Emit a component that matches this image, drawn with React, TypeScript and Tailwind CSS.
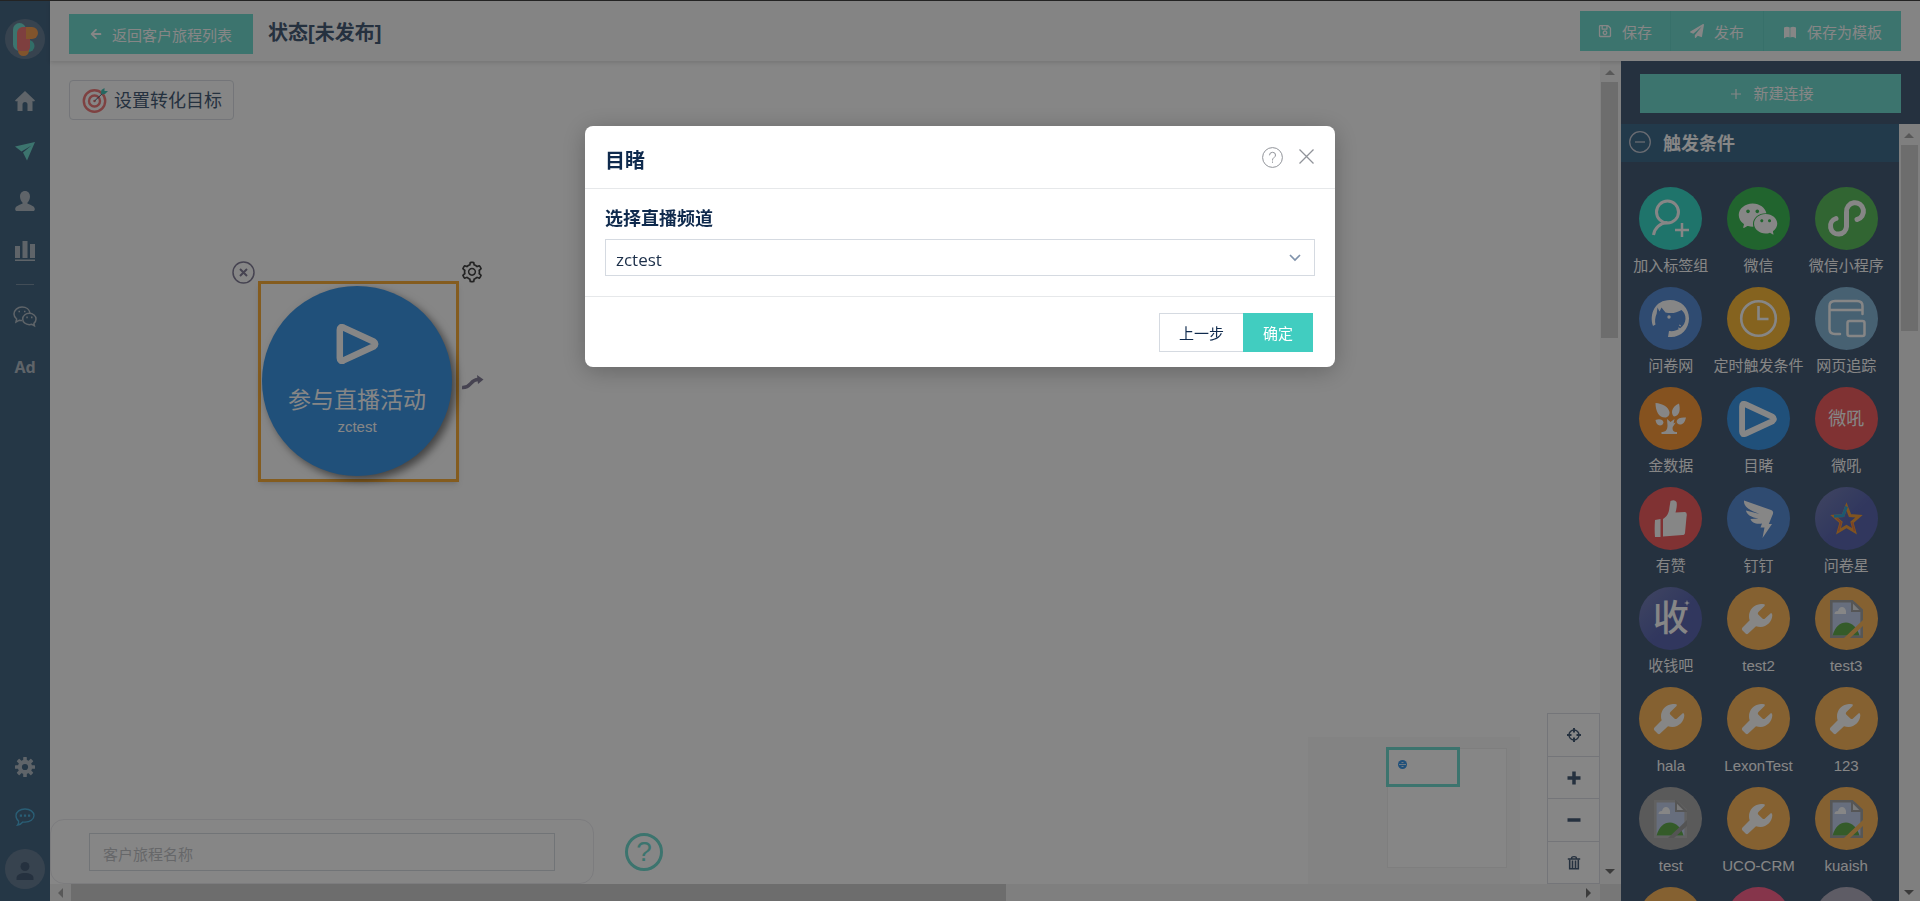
import React from "react";
import { AiOutlineSetting, AiFillWechat } from "react-icons/ai";
import { FaArrowLeft, FaPaperPlane, FaRegSave } from "react-icons/fa";

type IconProps = { className?: string };

function Logo() {
  return (
    <svg viewBox="0 0 40 40" className="size-10" aria-hidden="true">
      <circle cx="20" cy="20" r="20" fill="#6a8097" />
      <rect x="8" y="4" width="13" height="28" rx="6.500" fill="#72ddd2" />
      <circle cx="23.500" cy="27" r="6" fill="#5ed0c4" />
      <rect x="13" y="8" width="20" height="12" rx="6" fill="#f5a054" />
      <rect x="13" y="22" width="11" height="15" rx="5.500" fill="#f5a054" />
      <path d="M12 14a6 6 0 0 1 6-6h3v12h4v8q0 4-4 4h-6q-3 0-3-4z" fill="#f07878" />
    </svg>
  );
}

function HomeIcon() {
  return (
    <svg viewBox="0 0 20 20" className="size-5" fill="currentColor" aria-hidden="true">
      <path d="M10 0 20 9.500 19 10.500 17.500 10V20H12.500V13.500Q12.500 11 10 11T7.500 13.500V20H2.500V10L1 10.500 0 9.500Z" />
    </svg>
  );
}

function SendIcon() {
  return (
    <svg viewBox="0 0 20 20" className="size-5" fill="currentColor" aria-hidden="true">
      <path d="M20 1 0 5.500 6.500 10.500 16.500 4.500 8 11.500 12 19.500Z" />
    </svg>
  );
}

function UserIcon() {
  return (
    <svg viewBox="0 0 20 20" className="size-5" fill="currentColor" aria-hidden="true">
      <path d="M10 0c3.200 0 5 2.400 5 5.600 0 2.600-1.200 4.700-2.500 6v1.200c2.500.9 7.300 2.400 7.300 5.200 0 1.400-.6 2-1.800 2H2c-1.200 0-1.800-.6-1.800-2 0-2.800 4.800-4.300 7.300-5.200v-1.200C6.200 10.300 5 8.200 5 5.600 5 2.400 6.800 0 10 0z" />
    </svg>
  );
}

function BarsIcon() {
  return (
    <svg viewBox="0 0 20 20" className="size-5" fill="currentColor" aria-hidden="true">
      <path d="M0 5h5v12H0zM7.500 0h5v17h-5zM15 3h5v14h-5zM0 18.500h20V20H0z" />
    </svg>
  );
}

function WechatOutlineIcon() {
  return (
    <svg viewBox="0 0 24 22" className="h-[22px] w-6" fill="none" stroke="currentColor" strokeWidth="1.500" aria-hidden="true">
      <path d="M9 14.500c-1 0-1.800-.1-2.600-.3L3 16l.6-3C2 11.800 1 10 1 8c0-3.800 3.600-7 8-7s7.500 2.600 8 6" />
      <path d="M23 13c0-3.200-3-5.700-6.700-5.700S9.700 9.800 9.700 13s2.900 5.700 6.600 5.700c.9 0 1.700-.1 2.500-.4l2.600 1.500-.5-2.400C22.200 16.300 23 14.700 23 13z" />
      <path d="M5.500 5.500h1.500M11 5.500h1.500M13.300 11.300h1.500M18 11.300h1.500" strokeWidth="1.700" />
    </svg>
  );
}

function GearIcon() {
  return (
    <svg viewBox="0 0 20 20" className="size-5" aria-hidden="true">
      <g fill="currentColor">
        <rect x="8.200" y="0" width="3.600" height="20" rx="0.600" />
        <rect x="0" y="8.200" width="20" height="3.600" rx="0.600" />
        <rect x="8.200" y="0" width="3.600" height="20" rx="0.600" transform="rotate(45 10 10)" />
        <rect x="8.200" y="0" width="3.600" height="20" rx="0.600" transform="rotate(-45 10 10)" />
        <circle cx="10" cy="10" r="7.200" />
      </g>
      <circle cx="10" cy="10" r="3.100" fill="#486985" />
    </svg>
  );
}

function ChatIcon() {
  return (
    <svg viewBox="0 0 20 18" className="h-[18px] w-5" aria-hidden="true">
      <path d="M10 1c5 0 9 2.800 9 6.600s-4 6.600-9 6.600c-.8 0-1.500 0-2.200-.2C6.600 15.600 4.800 16.600 2.600 17c.8-1 1.200-2.300 1-3.900C2 12 1 10 1 7.600 1 3.800 5 1 10 1z" fill="none" stroke="currentColor" strokeWidth="1.300" />
      <path d="M4.800 6.500h2.200v2.200H4.800zM8.900 6.500h2.200v2.200H8.900zM13 6.500h2.200v2.200H13z" fill="currentColor" />
    </svg>
  );
}

function AvatarIcon() {
  return (
    <svg viewBox="0 0 40 40" className="size-10" aria-hidden="true">
      <circle cx="20" cy="20" r="20" fill="#6a8097" />
      <circle cx="20" cy="17.500" r="4.500" fill="#485d78" />
      <path d="M11.500 31v-2c0-3.500 4-5 8.500-5s8.500 1.500 8.500 5v2z" fill="#485d78" />
    </svg>
  );
}

function TargetIcon() {
  return (
    <svg viewBox="0 0 26 26" className="size-[26px]" fill="none" aria-hidden="true">
      <circle cx="12.500" cy="14" r="10.700" stroke="#f07c7c" strokeWidth="2.400" />
      <circle cx="12.500" cy="14" r="5.500" stroke="#f07c7c" strokeWidth="2.400" />
      <circle cx="12.500" cy="14" r="1.300" fill="#f07c7c" />
      <path d="M12.500 14 22 5" stroke="#485d78" strokeWidth="1" />
      <path d="m19 6 .4-3L22.500 1v3H26l-3 3-3 .6z" fill="#48c4b8" />
    </svg>
  );
}

function BookIcon() {
  return (
    <svg viewBox="0 0 14 14" className="size-3.5" fill="currentColor" aria-hidden="true">
      <path d="M1 1.500Q4 0 6.700 1.500V11.500Q4 10.400 1 12.500zM7.300 1.500Q10 0 13 1.500V12.500Q10 10.400 7.300 11.500z" />
    </svg>
  );
}

function PlayIcon({ className }: IconProps) {
  return (
    <svg viewBox="0 0 42 40" className={className} aria-hidden="true">
      <path d="M3.300 6Q3.300 2 7 3.600L37 17.500Q40.500 20 37 22.500L7 36.400Q3.300 38 3.300 34Z" fill="none" stroke="white" strokeWidth="6.500" strokeLinejoin="round" />
    </svg>
  );
}

function MemberAddIcon() {
  return (
    <svg viewBox="0 0 63 63" className="size-full" fill="none" stroke="white" strokeWidth="3" aria-hidden="true">
      <circle cx="28.500" cy="25" r="11" />
      <path d="M14.500 48c1-7 6.500-12 14-12.500" />
      <path d="M43 36v14M36 43h14" strokeWidth="2.500" />
    </svg>
  );
}

function MiniProgramIcon() {
  return (
    <svg viewBox="0 0 63 63" className="size-full" fill="none" stroke="white" strokeWidth="5" strokeLinecap="round" aria-hidden="true">
      <path d="M21 31.500a8 8 0 1 0 10.500 8V25A8.500 8.500 0 1 1 42 32.500" />
    </svg>
  );
}

function SurveyDogIcon() {
  return (
    <svg viewBox="0 0 63 63" className="size-full" aria-hidden="true">
      <path d="M14 39C10 27 16 13 31 13c11 0 19 8 19 18.500S42 50 32 50h-3l1-6c8 1 16-4 16.500-12 .2-4-1.500-7-4-9-5 3-10 3.800-16 2.500l-4-5-2 4-2-4-.8 6c-1.700 4-2 8-1.200 11z" fill="white" />
      <circle cx="30" cy="30" r="1.700" fill="white" />
      <path d="m40 38 2 1M39 41l2 .5" stroke="white" strokeWidth="1" />
    </svg>
  );
}

function ClockIcon() {
  return (
    <svg viewBox="0 0 63 63" className="size-full" fill="none" stroke="white" strokeWidth="2.600" aria-hidden="true">
      <circle cx="31.500" cy="31.500" r="17.300" />
      <path d="M31.500 19v13h10" />
    </svg>
  );
}

function WebTrackIcon() {
  return (
    <svg viewBox="0 0 63 63" className="size-full" fill="none" stroke="white" strokeWidth="2.500" strokeLinecap="round" aria-hidden="true">
      <path d="M25 47h-5q-5.500 0-5.500-5V19q0-5 5.500-5h22q5.500 0 5.500 5v8M14.500 23H47" />
      <rect x="32.500" y="34" width="17" height="15" rx="2" />
    </svg>
  );
}

function TreeIcon() {
  return (
    <svg viewBox="0 0 63 63" className="size-full" fill="white" aria-hidden="true">
      <path d="M16.500 16c7 .5 13 4 14 9 .3 3-1.500 5.500-4.500 5.500-6 0-9.500-6-9.500-14.500zM40 16.500c1.500 6 1 12-5 13-3-2.500-3.500-9 5-13zM16.500 33c4-1.500 7.500-.5 8 2.500-.5 2-1.500 3-3.500 3-2.500 0-4-2.500-4.500-5.500zM47 30.500c-1 4.500-3 7-6 7-2 0-3.500-1.500-3.300-3.500.8-3 4.800-4 9.300-3.500z" />
      <path d="m28 32 3.500 3 4-3-1 4.500 2.200-1-3 4.500c-.5 3 .5 5 4.300 5v2H22.500v-2c4 0 6-2 6-6.500z" />
    </svg>
  );
}

function ThumbIcon() {
  return (
    <svg viewBox="0 0 63 63" className="size-full" fill="white" aria-hidden="true">
      <path d="m16 33 5.500-1v18H16q-.7-8 0-17zM24 32c4-2.500 6-6 6.500-12l1-6q4-2 6 1c.8 3 0 7-1 10.500l9.500-.5q2.500.5 1.500 5l-1.500 16c-.3 1.500-1 2-2.500 2L24 49.500z" />
    </svg>
  );
}

function WingIcon() {
  return (
    <svg viewBox="0 0 63 63" className="size-full" fill="white" aria-hidden="true">
      <path d="M17 13.500 44 23c3 1.200 2.200 3.500 1.500 5l-3.700 9H45L35.500 51l2-10.500h-4l1.500-4c-6 1-10.500-1-11.500-4.500l8-.5c-7-1-12-4-12.500-8l13.500 3.500C23.500 23.500 16.500 20 17 13.500z" />
    </svg>
  );
}

function StarIcon() {
  return (
    <svg viewBox="0 0 63 63" className="size-full" fill="none" strokeWidth="3" aria-hidden="true">
      <path d="m31.500 19.500 3.500 9 9 .8-7 6 2.500 9-8-4.800-8 4.800 2.500-9-7-6 9-.8z" stroke="#f5a13c" />
      <path d="m19 29.300 9-.8 3.500-9" stroke="#35a8d8" />
      <path d="m23.500 44.300 2.500-9-4.500-4M39.500 44.300l-2.500-9" stroke="#ec7b46" strokeWidth="1.500" />
    </svg>
  );
}

function ShouIcon() {
  return (
    <span className="relative text-4xl leading-none font-medium">
      收
      <svg viewBox="0 0 6 6" className="absolute -top-px -right-px size-1.5" aria-hidden="true">
        <path d="M3 0 3.700 2.300 6 3 3.700 3.700 3 6 2.300 3.700 0 3 2.300 2.300Z" fill="white" />
      </svg>
    </span>
  );
}

function WrenchIcon() {
  return (
    <svg viewBox="0 0 63 63" className="size-full" fill="white" aria-hidden="true">
      <path d="M37.500 17.300Q36.500 16.800 34 17C26.500 17.500 22 23 22 29.500Q22 31.500 22.700 33.300L15.300 40.800Q14.300 42 15.300 43.300L18.800 46.700Q20 47.600 21.200 46.600L29 39.300Q31 40 33.500 40C40 39.800 45 34.500 45.300 28.500Q45.400 26.200 44 26L38 31.500Q36.800 32.600 35.400 31.500L31.200 27.500Q30.200 26.200 31.400 25L37.300 19.300Q38.300 18.200 37.500 17.300Z" />
    </svg>
  );
}

function BrokenImage({ muted }: { muted?: boolean }) {
  return (
    <svg viewBox="0 0 33 38" className="h-[38px] w-[33px]" aria-hidden="true">
      <path d="M1.300 1.300h21L31.700 10v26.700H1.300z" fill="#c4d2ee" stroke={muted ? "#b8b8b8" : "#a4a4a4"} strokeWidth="2.600" />
      <path d="M4.500 14q0-3 3.500-3 1-4 4-4t4 4v3z" fill="#fff" />
      <path d="M2.600 35.400C5 27 10 22.600 16 22.600c6 0 11 5 13.500 12.800z" fill="#63ad4e" />
      <path d="M22 1.300V11h9.700z" fill="#e8e8e8" stroke="#a4a4a4" strokeWidth="2" />
      <path d="M23 0h10v8z" fill={muted ? "#acacac" : "#fdb95e"} />
      <path d="M14 38 33 20v6L20 38z" fill={muted ? "#a0a0a0" : "#fdb95e"} />
    </svg>
  );
}

function CrosshairIcon() {
  return (
    <svg viewBox="0 0 14 14" className="size-3.5" fill="none" stroke="currentColor" aria-hidden="true">
      <circle cx="7" cy="7" r="5" strokeWidth="1.400" />
      <path d="M7 0v4.500M7 9.500V14M0 7h4.500M9.500 7H14" strokeWidth="2" />
    </svg>
  );
}

function TrashIcon() {
  return (
    <svg viewBox="0 0 14 14" className="size-3.5" fill="none" stroke="currentColor" aria-hidden="true">
      <path d="M4.500 2.500Q4.500.7 7 .7t2.500 1.800M.8 3h12.400" strokeWidth="1.300" />
      <path d="M2.700 3.500v9.300h8.600V3.500M5.500 4.500v7.500M8.500 4.500v7.500" strokeWidth="1.600" />
    </svg>
  );
}

function Triangle({ dir }: { dir: "up" | "down" | "left" | "right" }) {
  const paths = {
    up: "M0 7 5 2 10 7Z",
    down: "M0 3 5 8 10 3Z",
    left: "M7 0 2 5 7 10Z",
    right: "M3 0 8 5 3 10Z",
  };
  return (
    <svg viewBox="0 0 10 10" className="size-2.5 shrink-0" aria-hidden="true">
      <path d={paths[dir]} fill={dir === "down" || dir === "right" ? "#707070" : "#a8a8a8"} />
    </svg>
  );
}

const navTop = [
  { label: "首页", icon: <HomeIcon /> },
  { label: "旅程", icon: <SendIcon />, active: true },
  { label: "用户", icon: <UserIcon /> },
  { label: "报表", icon: <BarsIcon /> },
];

const wrench = <WrenchIcon />;
const broken = <BrokenImage />;

const triggers: { label: string; bg: string; icon: React.ReactNode }[] = [
  { label: "加入标签组", bg: "bg-[#3cdccb]", icon: <MemberAddIcon /> },
  { label: "微信", bg: "bg-[#40bf58]", icon: <AiFillWechat className="size-[44px]" /> },
  { label: "微信小程序", bg: "bg-[#5dc060]", icon: <MiniProgramIcon /> },
  { label: "问卷网", bg: "bg-[#5a8fd8]", icon: <SurveyDogIcon /> },
  { label: "定时触发条件", bg: "bg-[#fdbc3c]", icon: <ClockIcon /> },
  { label: "网页追踪", bg: "bg-[#87b8da]", icon: <WebTrackIcon /> },
  { label: "金数据", bg: "bg-[#fd9d3c]", icon: <TreeIcon /> },
  { label: "目睹", bg: "bg-[#3d98e9]", icon: <PlayIcon className="h-9 w-[38px]" /> },
  { label: "微吼", bg: "bg-[#f45f62]", icon: <span className="text-lg">微吼</span> },
  { label: "有赞", bg: "bg-[#f45f62]", icon: <ThumbIcon /> },
  { label: "钉钉", bg: "bg-[#5a8fd8]", icon: <WingIcon /> },
  { label: "问卷星", bg: "bg-linear-135 from-[#7580b8] from-10% to-[#5d69b4] to-55%", icon: <StarIcon /> },
  { label: "收钱吧", bg: "bg-linear-135 from-[#7580b8] from-10% to-[#5d69b4] to-55%", icon: <ShouIcon /> },
  { label: "test2", bg: "bg-[#fdb95e]", icon: wrench },
  { label: "test3", bg: "bg-[#fdb95e]", icon: broken },
  { label: "hala", bg: "bg-[#fdb95e]", icon: wrench },
  { label: "LexonTest", bg: "bg-[#fdb95e]", icon: wrench },
  { label: "123", bg: "bg-[#fdb95e]", icon: wrench },
  { label: "test", bg: "bg-[#acacac]", icon: <BrokenImage muted /> },
  { label: "UCO-CRM", bg: "bg-[#fdb95e]", icon: wrench },
  { label: "kuaish", bg: "bg-[#fdb95e]", icon: broken },
  { label: "", bg: "bg-[#fdb95e]", icon: null },
  { label: "", bg: "bg-[#ff6690]", icon: null },
  { label: "", bg: "bg-[#b4afc0]", icon: null },
];

function Sidebar() {
  return (
    <nav className="flex w-[50px] shrink-0 flex-col items-center bg-[#486985] pt-[18px] pb-3 text-[#b5bfc8]">
      <Logo />
      <div className="flex flex-col items-center pt-[17px]">
        {navTop.map((n) => (
          <a key={n.label} href="#" aria-label={n.label} className={n.active ? "flex h-[50px] items-center text-[#72ddd2]" : "flex h-[50px] items-center"}>
            {n.icon}
          </a>
        ))}
      </div>
      <hr className="mt-2 mb-[7px] w-[18px] border-[#7f93a6]" />
      <a href="#" aria-label="微信" className="flex h-[50px] items-center"><WechatOutlineIcon /></a>
      <a href="#" className="flex h-[50px] items-center font-['Noto_Sans',sans-serif] text-base font-bold">Ad</a>
      <div className="mt-auto flex flex-col items-center">
        <a href="#" aria-label="设置" className="flex h-[50px] items-center"><GearIcon /></a>
        <a href="#" aria-label="消息" className="flex h-[50px] items-center text-[#4fb4e0]"><ChatIcon /></a>
        <a href="#" aria-label="账户" className="mt-[7px]"><AvatarIcon /></a>
      </div>
    </nav>
  );
}

function TopBar() {
  const action = "flex h-10 cursor-pointer items-center gap-2.5 border-[#6ad5ca] pt-1";
  return (
    <header className="z-10 flex h-[60px] shrink-0 items-center bg-[#fcfcfc] px-[19px] shadow-[0_2px_4px_rgba(0,0,0,0.12)]">
      <button type="button" className="mt-1.5 flex h-10 w-[184px] items-center justify-center gap-2.5 bg-[#72ddd2] pt-1 text-[15px] text-white">
        <FaArrowLeft className="mb-1 size-3" />
        返回客户旅程列表
      </button>
      <h1 className="ml-[15px] pt-1 text-xl font-bold text-[#485d78]">状态[未发布]</h1>
      <div className="ml-auto flex bg-[#72ddd2] text-[15px] text-white">
        <button type="button" className={`${action} border-r px-[18px]`}><FaRegSave className="mb-1 size-3.5" />保存</button>
        <button type="button" className={`${action} border-r px-[19px]`}><FaPaperPlane className="mb-1 size-3.5" />发布</button>
        <button type="button" className={`${action} px-[19px]`}><BookIcon />保存为模板</button>
      </div>
    </header>
  );
}

function JourneyNode() {
  return (
    <div className="absolute top-[220px] left-[208px] size-[201px] border-3 border-[#fcb03c] pt-0.5 pl-px shadow-md">
      <button type="button" aria-label="删除节点" className="absolute -top-[23px] -left-[29px] size-[23px] text-[#85809a]">
        <svg viewBox="0 0 23 23" fill="none" stroke="currentColor" strokeWidth="1.500">
          <circle cx="11.500" cy="11.500" r="10.500" />
          <path d="m8 8 7 7M15 8l-7 7" strokeWidth="2" />
        </svg>
      </button>
      <button type="button" aria-label="节点设置" className="absolute -top-6 -right-7 text-[#444]">
        <AiOutlineSetting className="size-6" />
      </button>
      <svg viewBox="0 0 22 15" className="absolute top-[91px] -right-7 h-[15px] w-[22px]" aria-hidden="true">
        <path d="M0 12.500C9 13.500 8 4.500 16 4.500" fill="none" stroke="#85809a" strokeWidth="3.500" />
        <path d="m15 0 6.500 4.500L16 9z" fill="#85809a" />
      </svg>
      <div className="flex size-[190px] flex-col items-center rounded-full bg-[#3d98e9] pt-[38px] text-white shadow-[4px_4px_8px_rgba(0,0,0,0.5)]">
        <PlayIcon className="h-10 w-[43px]" />
        <div className="mt-5 text-[23px] leading-8 whitespace-nowrap">参与直播活动</div>
        <div className="text-[15px] leading-[22px]">zctest</div>
      </div>
    </div>
  );
}

function Minimap() {
  return (
    <div className="absolute right-20 bottom-0 h-[147px] w-[212px] bg-[#f9f9f9] pt-[11px] pl-[79px]">
      <div className="relative size-[120px] border border-[#f0f0f0] bg-white">
        <div className="absolute -top-0.5 -left-0.5 h-10 w-[74px] border-3 border-[#72ddd2] p-2.5 pl-[9px]">
          <svg viewBox="0 0 9 9" className="size-[9px]" aria-hidden="true">
            <circle cx="4.500" cy="4.500" r="4.500" fill="#3d98e9" />
            <path d="M1 4.500h7M3.500 2.500h2M3.500 6.500h2" stroke="#cfe4f8" />
          </svg>
        </div>
      </div>
    </div>
  );
}

function Canvas() {
  const tool = "flex w-full items-center justify-center border-b border-[#dcdfe6]";
  return (
    <main className="flex min-w-0 flex-1 flex-col">
      <div className="flex min-h-0 flex-1">
        <section className="relative min-w-0 flex-1 bg-white">
          <button type="button" className="mt-[19px] ml-[19px] flex h-10 items-center gap-1.5 rounded border border-[#dcdfe6] pr-[11px] pl-3 text-lg text-[#485d78]">
            <TargetIcon />
            <span className="pt-0.5">设置转化目标</span>
          </button>
          <JourneyNode />
          <div className="absolute bottom-0 left-0 flex items-center">
            <div className="w-[544px] rounded-[14px] border border-[#ececf0] px-[38px] pt-[13px] pb-3">
              <input aria-label="客户旅程名称" placeholder="客户旅程名称" className="block h-[38px] w-full border border-[#d7dce2] px-[13px] pt-1 text-[15px] placeholder-[#c3c5c9]" />
            </div>
            <button type="button" aria-label="帮助" className="ml-[31px] flex size-[38px] items-center justify-center rounded-full border-3 border-[#72ddd2] text-[28px] leading-none text-[#72ddd2]">?</button>
          </div>
          <Minimap />
          <div className="absolute right-0 bottom-0 w-[53px] border-x border-t border-[#dcdfe6] bg-white text-[#485d78]">
            <button type="button" aria-label="定位" className={`${tool} h-[43px]`}><CrosshairIcon /></button>
            <button type="button" aria-label="放大" className={`${tool} h-[42px]`}>
              <svg viewBox="0 0 14 14" className="size-3.5"><path d="M7 .5v13M.5 7h13" stroke="currentColor" strokeWidth="3.500" /></svg>
            </button>
            <button type="button" aria-label="缩小" className={`${tool} h-[43px]`}>
              <svg viewBox="0 0 14 14" className="size-3.5"><path d="M.5 7h13" stroke="currentColor" strokeWidth="3.500" /></svg>
            </button>
            <button type="button" aria-label="删除" className={`${tool} h-[42px]`}><TrashIcon /></button>
          </div>
        </section>
        <div className="flex w-[21px] shrink-0 flex-col items-center bg-[#f6f6f6] pt-[7px] pr-0.5 pb-2">
          <Triangle dir="up" />
          <div className="mt-1 h-64 w-[17px] bg-[#d0d0d0]" />
          <div className="mt-auto"><Triangle dir="down" /></div>
        </div>
      </div>
      <div className="flex h-[17px] shrink-0 items-center bg-[#f2f2f2]">
        <div className="flex w-[21px] justify-center"><Triangle dir="left" /></div>
        <div className="h-[17px] w-[59.5%] bg-[#d0d0d0]" />
        <div className="ml-auto pr-[7px]"><Triangle dir="right" /></div>
        <div className="h-full w-[21px] bg-[#e2e2e2]" />
      </div>
    </main>
  );
}

function TriggerPanel() {
  return (
    <aside className="z-20 flex w-[299px] shrink-0 flex-col bg-[#485d78] text-white">
      <div className="px-[19px] pt-[13px] pb-[11px]">
        <button type="button" className="flex h-[39px] w-full items-center justify-center gap-3 bg-[#72ddd2] pt-0.5 pl-1 text-[15px]">
          <svg viewBox="0 0 10 10" className="mb-0.5 size-2.5" aria-hidden="true"><path d="M5 0v10M0 5h10" stroke="currentColor" strokeWidth="1.200" /></svg>
          新建连接
        </button>
      </div>
      <div className="flex min-h-0 flex-1">
        <div className="min-w-0 flex-1 overflow-hidden">
          <h2 className="flex h-[38px] items-center gap-3 bg-[#416e8f] pt-0.5 pl-2 text-lg font-bold">
            <svg viewBox="0 0 22 22" className="mb-1 size-[22px]" fill="none" stroke="#c8ccd8" strokeWidth="1.300" aria-hidden="true">
              <circle cx="11" cy="11" r="10.300" />
              <path d="M6 11h10" />
            </svg>
            触发条件
          </h2>
          <ul className="grid grid-cols-3 pt-[25px] pr-[9px] pl-[6px]">
            {triggers.map((t, i) => (
              <li key={i} className="flex h-[100px] min-w-0 flex-col items-center whitespace-nowrap">
                <div className={`flex size-[63px] shrink-0 items-center justify-center rounded-full ${t.bg}`}>{t.icon}</div>
                <div className="text-[15px] leading-8">{t.label}</div>
              </li>
            ))}
          </ul>
        </div>
        <div className="flex w-[21px] shrink-0 flex-col items-center bg-[#f2f2f2] pt-[7px] pr-px pb-1">
          <Triangle dir="up" />
          <div className="mt-1 h-[186px] w-[17px] bg-[#d0d0d0]" />
          <div className="mt-auto"><Triangle dir="down" /></div>
        </div>
      </div>
    </aside>
  );
}

function ChannelDialog() {
  return (
    <div className="fixed inset-0 z-50 flex items-start justify-center bg-black/47.5 px-4 pt-[126px]">
      <div role="dialog" aria-modal="true" aria-labelledby="dialog-title" className="w-full max-w-[750px] rounded-lg bg-white text-[#0f2a4d] shadow-[0_4px_24px_rgba(0,0,0,0.25)]">
        <div className="flex h-[63px] items-center border-b border-[#e6e8ea] px-5">
          <h2 id="dialog-title" className="pt-2 text-xl font-bold">目睹</h2>
          <button type="button" aria-label="帮助" className="ml-auto text-[#909399]">
            <svg viewBox="0 0 21 21" className="size-[21px]" fill="none" stroke="currentColor">
              <circle cx="10.500" cy="10.500" r="9.900" />
              <path d="M7.500 8.300q0-3 3-3t3 2.700q0 1.500-1.500 2.600t-1.500 2.300v.6M10.500 14.500v1.300" />
            </svg>
          </button>
          <button type="button" aria-label="关闭" className="ml-4 text-[#909399]">
            <svg viewBox="0 0 15 15" className="mr-px mb-0.5 size-[15px]" fill="none" stroke="currentColor" strokeWidth="1.300">
              <path d="m.5.5 14 14M14.500.5l-14 14" />
            </svg>
          </button>
        </div>
        <div className="border-b border-[#e6e8ea] px-5 pt-4 pb-5">
          <label htmlFor="channel" className="block h-[34px] text-lg leading-[29px] font-bold">选择直播频道</label>
          <div className="relative">
            <select id="channel" defaultValue="zctest" className="block h-[37px] w-full appearance-none border border-[#d5dae1] bg-white px-2.5 pt-1 font-['Open_Sans','Noto_Sans_CJK_SC',sans-serif] text-[17px] text-[#1c2f49]">
              <option>zctest</option>
            </select>
            <svg viewBox="0 0 12 8" className="pointer-events-none absolute top-[15px] right-3.5 h-2 w-3" fill="none" stroke="#7f92ab" strokeWidth="1.700" aria-hidden="true">
              <path d="m1 1 5 5 5-5" />
            </svg>
          </div>
        </div>
        <div className="flex justify-end px-[22px] pt-4 pb-[15px] text-[15px]">
          <button type="button" className="h-[39px] w-[84px] border border-r-0 border-[#d5dae1] pt-1">上一步</button>
          <button type="button" className="h-[39px] w-[70px] bg-[#41cdc0] pt-1 text-white">确定</button>
        </div>
      </div>
    </div>
  );
}

export default function App() {
  return (
    <div className="flex h-screen overflow-hidden border-t border-[#444] font-['Liberation_Sans','Noto_Sans_CJK_SC',sans-serif]">
      <Sidebar />
      <div className="flex min-w-0 flex-1 flex-col">
        <TopBar />
        <div className="flex min-h-0 flex-1">
          <Canvas />
          <TriggerPanel />
        </div>
      </div>
      <ChannelDialog />
    </div>
  );
}
